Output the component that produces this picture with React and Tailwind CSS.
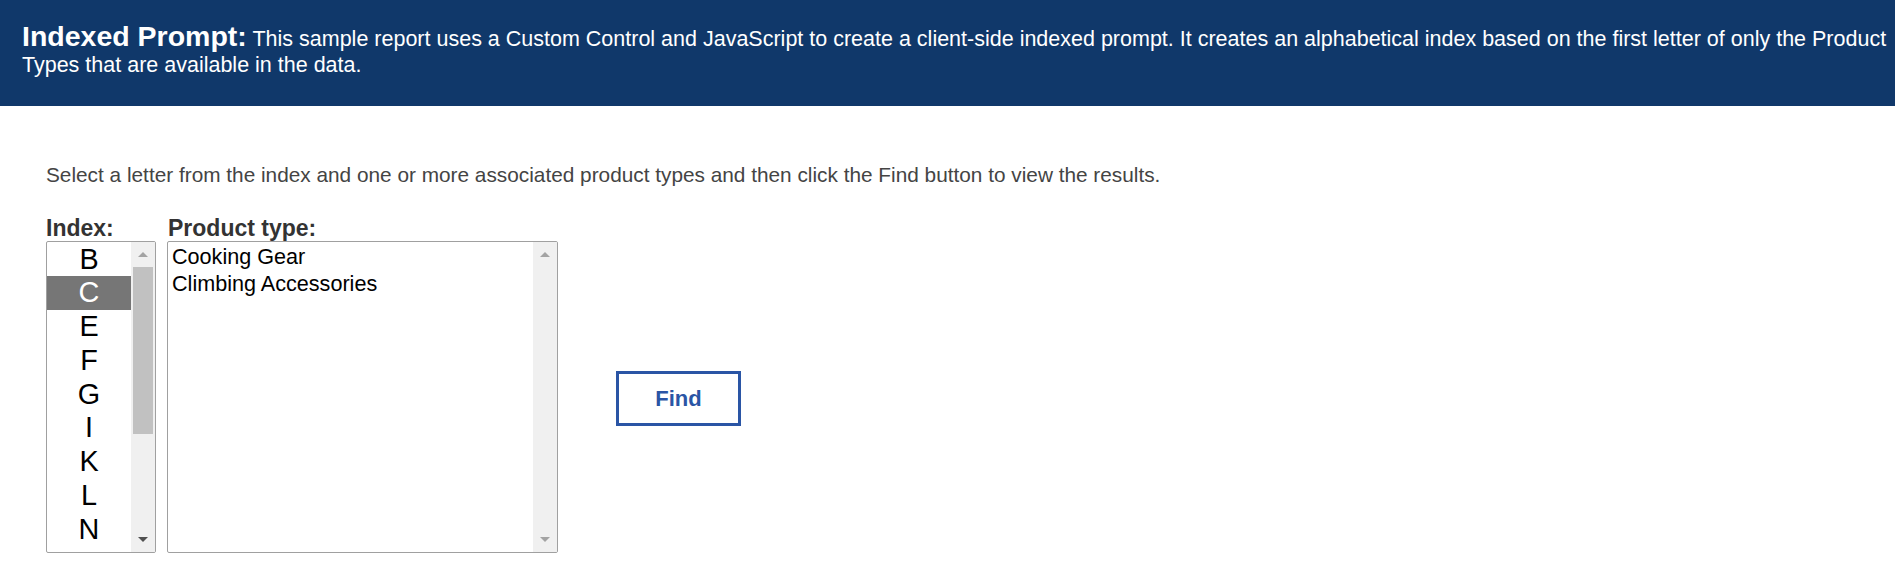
import React, { useState } from "react";

const letters = ["B", "C", "E", "F", "G", "I", "K", "L", "N", "P"];

const productsByLetter = {
  B: ["Binoculars"],
  C: ["Cooking Gear", "Climbing Accessories"],
  E: ["Eyewear"],
  F: ["First Aid"],
  G: ["Golf Accessories"],
  I: ["Irons"],
  K: ["Knives"],
  L: ["Lanterns"],
  N: ["Navigation"],
  P: ["Packs", "Putters"],
};

// fake windows-style scrollbar, arrows + thumb
const ScrollBar = ({ thumb, upActive, downActive }) => (
  <div className="w-[24px] h-full bg-[#f0f0f0] flex flex-col items-center">
    <div className="h-[25px] w-full flex items-center justify-center">
      <div
        className={`w-0 h-0 border-l-[5px] border-r-[5px] border-b-[5px] border-l-transparent border-r-transparent ${
          upActive ? "border-b-[#505050]" : "border-b-[#a3a3a3]"
        }`}
      />
    </div>
    <div className="flex-1 w-full px-[2px]">
      {thumb && <div className="w-full h-[167px] bg-[#c1c1c1]" />}
    </div>
    <div className="h-[25px] w-full flex items-center justify-center">
      <div
        className={`w-0 h-0 border-l-[5px] border-r-[5px] border-t-[5px] border-l-transparent border-r-transparent ${
          downActive ? "border-t-[#505050]" : "border-t-[#a3a3a3]"
        }`}
      />
    </div>
  </div>
);

export default function App() {
  const [letter, setLetter] = useState("C");
  const [selected, setSelected] = useState([]);

  const toggleProduct = (name) => {
    setSelected((prev) =>
      prev.includes(name) ? prev.filter((p) => p !== name) : [...prev, name]
    );
  };

  return (
    <div className="min-h-[562px] bg-white font-['Liberation_Sans',Arial,sans-serif]">
      {/* header band */}
      <header className="h-[106px] bg-[#10386a] pl-[22px] pt-[23px] text-white text-[21.5px] leading-[26px]">
        <span className="font-bold text-[28.5px]">Indexed Prompt:</span>{" "}
        This sample report uses a Custom Control and JavaScript to create a client-side indexed
        prompt. It creates an alphabetical index based on the first letter of only the Product
        Types that are available in the data.
      </header>

      <main className="pl-[46px]">
        <p className="mt-[58px] text-[20.8px] leading-[22px] text-[#444]">
          Select a letter from the index and one or more associated product types and then click
          the Find button to view the results.
        </p>

        <div className="mt-[29px] flex">
          {/* index list */}
          <div className="flex flex-col">
            <label className="font-bold text-[23px] leading-[26px] text-[#333]">Index:</label>
            <div className="w-[110px] h-[312px] border border-[#a0a0a0] rounded-[2px] flex overflow-hidden">
              <div className="flex-1 overflow-hidden">
                {letters.map((l) => (
                  <div
                    key={l}
                    onClick={() => {
                      setLetter(l);
                      setSelected([]);
                    }}
                    className={`h-[33.8px] flex items-center justify-center text-[28.8px] leading-none cursor-pointer ${
                      l === letter ? "bg-[#767676] text-white" : "text-black"
                    }`}
                  >
                    {l}
                  </div>
                ))}
              </div>
              <ScrollBar thumb upActive={false} downActive />
            </div>
          </div>

          {/* product type list */}
          <div className="flex flex-col ml-[11px]">
            <label className="pl-[1px] font-bold text-[23px] leading-[26px] text-[#333]">
              Product type:
            </label>
            <div className="w-[391px] h-[312px] border border-[#a0a0a0] rounded-[2px] flex overflow-hidden">
              <div className="flex-1 pt-[2px]">
                {productsByLetter[letter].map((p) => (
                  <div
                    key={p}
                    onClick={() => toggleProduct(p)}
                    className={`h-[26.5px] pl-[4px] text-[21.6px] leading-[26.5px] cursor-pointer ${
                      selected.includes(p) ? "bg-[#767676] text-white" : "text-black"
                    }`}
                  >
                    {p}
                  </div>
                ))}
              </div>
              <ScrollBar />
            </div>
          </div>

          {/* find button */}
          <div className="self-end h-[312px] pt-[2px] flex items-center ml-[58px]">
            <button className="w-[125px] h-[55px] border-[3px] border-[#2a55a5] bg-white text-[#2a55a5] font-bold text-[22px]">
              Find
            </button>
          </div>
        </div>
      </main>
    </div>
  );
}
